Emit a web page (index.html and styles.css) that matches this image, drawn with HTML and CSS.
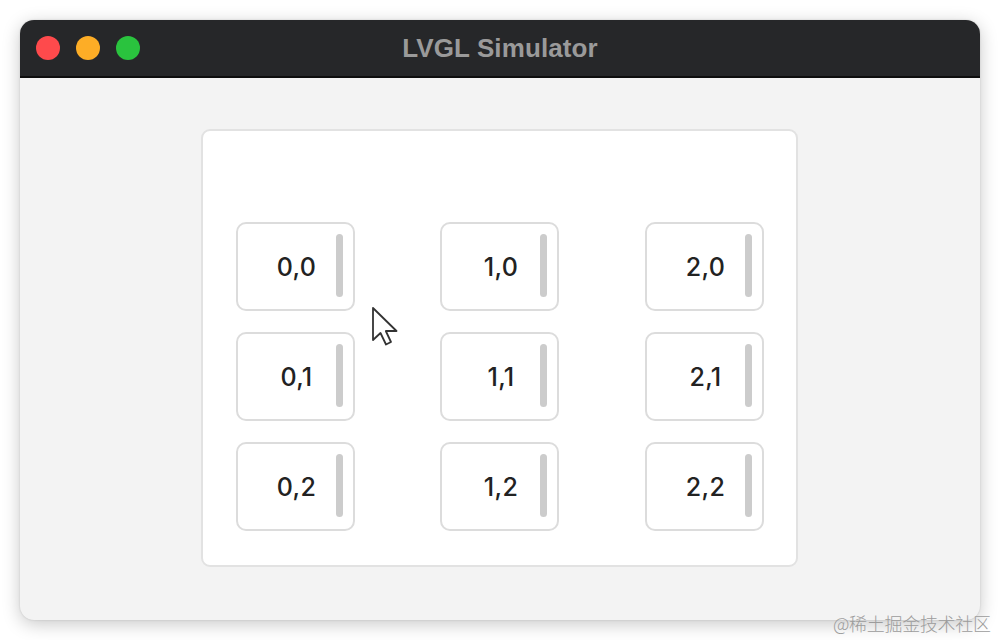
FILE: index.html
```html
<!DOCTYPE html>
<html>
<head>
<meta charset="utf-8">
<link rel="stylesheet" href="styles.css">
</head>
<body>
<div class="window">
  <div class="titlebar">
    <div class="lights">
      <span class="light red"></span>
      <span class="light yellow"></span>
      <span class="light green"></span>
    </div>
    <div class="title">LVGL Simulator</div>
  </div>
  <div class="content">
    <div class="panel">
      <div class="grid">
        <div class="cell"><span class="label">0,0</span><span class="bar"></span></div>
        <div class="cell"><span class="label">1,0</span><span class="bar"></span></div>
        <div class="cell"><span class="label">2,0</span><span class="bar"></span></div>
        <div class="cell"><span class="label">0,1</span><span class="bar"></span></div>
        <div class="cell"><span class="label">1,1</span><span class="bar"></span></div>
        <div class="cell"><span class="label">2,1</span><span class="bar"></span></div>
        <div class="cell"><span class="label">0,2</span><span class="bar"></span></div>
        <div class="cell"><span class="label">1,2</span><span class="bar"></span></div>
        <div class="cell"><span class="label">2,2</span><span class="bar"></span></div>
      </div>
    </div>
    <svg class="cursor" width="30" height="44" viewBox="0 0 30 44">
      <path d="M3 3 L3 35 L10.5 28 L16 39.5 L21 37 L15.8 26 L26.5 26 Z" fill="#fff" stroke="#333" stroke-width="1.8" stroke-linejoin="round"/>
    </svg>
  </div>
</div>
<div class="watermark">@稀土掘金技术社区</div>
</body>
</html>
```
FILE: styles.css
```css
html, body {
  margin: 0;
  padding: 0;
  background: #ffffff;
  width: 1000px;
  height: 640px;
  overflow: hidden;
  font-family: "Liberation Sans", Arial, sans-serif;
}
body {
  position: relative;
  padding: 20px;
  box-sizing: border-box;
}
.window {
  width: 960px;
  height: 600px;
  border-radius: 14px;
  overflow: hidden;
  background: #f3f3f3;
  box-shadow: 0 4px 18px rgba(0, 0, 0, 0.22), 0 0 2px rgba(0, 0, 0, 0.15);
  display: flex;
  flex-direction: column;
}
.titlebar {
  height: 56px;
  background: #262729;
  border-bottom: 2px solid #0e0e0e;
  position: relative;
  display: flex;
  align-items: center;
  justify-content: center;
  flex-shrink: 0;
}
.lights {
  position: absolute;
  left: 16px;
  top: 16px;
  display: flex;
  gap: 16px;
}
.light {
  width: 24px;
  height: 24px;
  border-radius: 50%;
  display: block;
}
.red { background: #fe4a4c; }
.yellow { background: #fdad26; }
.green { background: #2ac33e; }
.title {
  color: #9a9a9a;
  font-weight: bold;
  font-size: 26px;
  letter-spacing: 0.1px;
  margin-top: 0;
}
.content {
  flex: 1;
  position: relative;
  padding-top: 51px;
  display: flex;
  justify-content: center;
  align-items: flex-start;
}
.panel {
  width: 593px;
  height: 434px;
  background: #ffffff;
  border: 2px solid #e2e2e2;
  border-radius: 9px;
  box-sizing: content-box;
  margin-left: -2px;
}
.grid {
  display: grid;
  grid-template-columns: 119px 119px 119px;
  grid-auto-rows: 89px;
  column-gap: 85.5px;
  row-gap: 21px;
  padding: 91px 0 0 33px;
}
.cell {
  border: 2px solid #dcdcdc;
  border-radius: 10px;
  box-sizing: border-box;
  position: relative;
  display: flex;
  align-items: center;
  justify-content: center;
}
.label {
  font-family: Inter, "Open Sans", sans-serif;
  font-weight: 500;
  font-size: 25px;
  color: #222;
  margin-left: 3px;
  letter-spacing: 0.3px;
}
.bar {
  position: absolute;
  left: 98px;
  top: 10px;
  width: 7px;
  height: 63px;
  border-radius: 4px;
  background: #cccccc;
}
.cursor {
  position: absolute;
  left: 350px;
  top: 227px;
}
.watermark {
  position: absolute;
  left: 833px;
  top: 610px;
  font-family: "Noto Sans CJK SC", sans-serif;
  font-size: 18px;
  color: #9c9c9c;
  letter-spacing: -0.3px;
  font-weight: 300;
}
```
